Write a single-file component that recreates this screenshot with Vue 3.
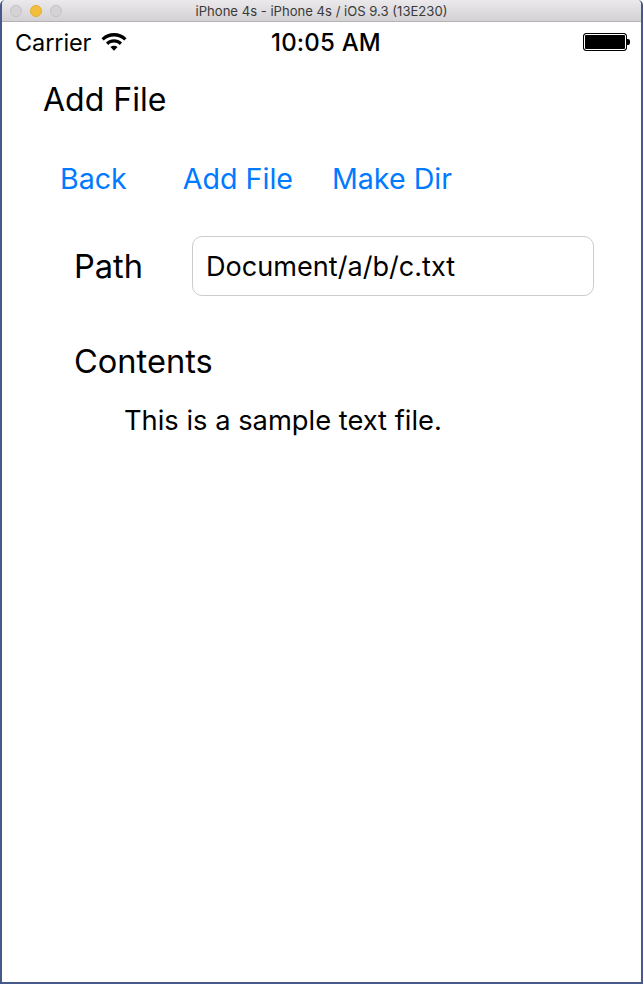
<template>
  <div class="window">
    <div class="titlebar">
      <div class="lights">
        <span class="light"></span>
        <span class="light yellow"></span>
        <span class="light"></span>
      </div>
      <div class="window-title">iPhone 4s - iPhone 4s / iOS 9.3 (13E230)</div>
    </div>
    <div class="screen">
      <div class="statusbar">
        <div class="carrier">
          <span>Carrier</span>
          <svg class="wifi" width="26" height="19" viewBox="0 0 26 19">
            <path d="M0.5 6.2 C7.5 -0.6 18.5 -0.6 25.5 6.2 L23.3 8.5 C17.5 3 8.5 3 2.7 8.5 Z" />
            <path d="M5 10.6 C9.8 6.2 16.2 6.2 21 10.6 L18.8 12.9 C15.2 9.8 10.8 9.8 7.2 12.9 Z" />
            <path d="M9.4 15 C11.6 13.2 14.4 13.2 16.6 15 L13 18.8 Z" />
          </svg>
        </div>
        <div class="clock">10:05 AM</div>
        <div class="battery">
          <span class="battery-body"></span>
          <span class="battery-tip"></span>
        </div>
      </div>

      <div class="heading">Add File</div>

      <div class="actions">
        <a class="action back">Back</a>
        <a class="action add">Add File</a>
        <a class="action">Make Dir</a>
      </div>

      <div class="path-row">
        <label class="field-label path-label">Path</label>
        <input class="path-input" type="text" value="Document/a/b/c.txt" />
      </div>

      <div class="field-label contents-label">Contents</div>
      <div class="contents">{{ contents }}</div>
    </div>
  </div>
</template>

<script setup>
const contents = 'This is a sample text file.'
</script>

<style>
html, body {
  margin: 0;
  background: #fff;
}
</style>

<style scoped>
.window {
  width: 643px;
  height: 984px;
  box-sizing: border-box;
  display: flex;
  flex-direction: column;
  border: 2px solid #46598a;
  border-top: 0;
  border-radius: 5px 5px 0 0;
  font-family: Inter, "Liberation Sans", sans-serif;
  color: #000;
  overflow: hidden;
}

.titlebar {
  height: 22px;
  flex: none;
  display: flex;
  align-items: center;
  position: relative;
  box-sizing: border-box;
  background: linear-gradient(#ebe9eb, #d3d1d3);
  border-bottom: 1px solid #b4b2b4;
}

.lights {
  display: flex;
  gap: 8px;
  margin-left: 8px;
}

.light {
  width: 12px;
  height: 12px;
  box-sizing: border-box;
  border-radius: 50%;
  background: #d5d3d5;
  border: 1px solid #c2c0c2;
}

.light.yellow {
  background: #f2bf3c;
  border-color: #e0ad2f;
}

.window-title {
  position: absolute;
  left: 0;
  right: 0;
  text-align: center;
  font-size: 13.1px;
  color: #3a3a3a;
}

.screen {
  flex: 1;
  background: #fff;
}

.statusbar {
  height: 40px;
  display: flex;
  align-items: center;
  justify-content: space-between;
  position: relative;
  padding: 0 11px 0 13px;
}

.carrier {
  display: flex;
  align-items: center;
  gap: 10px;
  font-size: 23.5px;
  letter-spacing: -0.1px;
}

.wifi {
  fill: #000;
  margin-top: -1px;
}

.clock {
  position: absolute;
  left: 9px;
  right: 0;
  text-align: center;
  font-size: 24px;
  font-weight: 500;
  letter-spacing: 0.2px;
}

.battery {
  display: flex;
  align-items: center;
}

.battery-body {
  width: 44px;
  height: 18px;
  box-sizing: border-box;
  background: #000;
  border: 1px solid #000;
  border-radius: 3px;
  box-shadow: inset 0 0 0 1px #fff;
}

.battery-tip {
  width: 3px;
  height: 6px;
  background: #000;
  border-radius: 0 2px 2px 0;
}

.heading {
  font-size: 32px;
  line-height: 38px;
  margin: 19px 0 0 41px;
}

.actions {
  display: flex;
  margin: 42px 0 0 58px;
  font-size: 28.6px;
  line-height: 36px;
}

.action {
  color: #007aff;
}

.back {
  margin-right: 56px;
}

.add {
  margin-right: 39px;
}

.path-row {
  display: flex;
  align-items: center;
  margin: 39px 0 0 72px;
}

.field-label {
  font-size: 32.6px;
  line-height: 38px;
}

.path-label {
  width: 118px;
  flex: none;
}

.path-input {
  width: 402px;
  height: 60px;
  box-sizing: border-box;
  padding: 0 13px;
  border: 1px solid #cccccc;
  border-radius: 10px;
  outline: none;
  background: #fff;
  font-family: inherit;
  font-size: 27.1px;
  color: #000;
}

.contents-label {
  margin: 46px 0 0 72px;
}

.contents {
  margin: 24px 0 0 122px;
  font-size: 27.3px;
  line-height: 34px;
}
</style>
